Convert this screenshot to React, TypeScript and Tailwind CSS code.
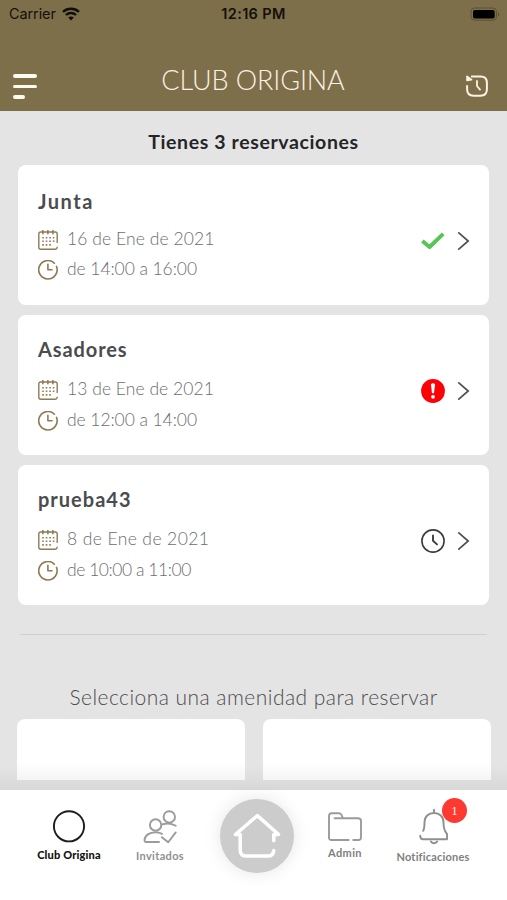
import React from 'react';
import clsx from 'clsx';

interface Reservation {
  id: number;
  name: string;
  date: string;
  time: string;
  status: 'approved' | 'rejected' | 'pending';
  nameClass: string;
  dateClass: string;
  timeClass: string;
  rowGap: string;
}

const reservations: Reservation[] = [
  {
    id: 1,
    name: 'Junta',
    date: '16 de Ene de 2021',
    time: 'de 14:00 a 16:00',
    status: 'approved',
    nameClass: 'mt-6 mb-[17px] tracking-[1.5px]',
    dateClass: 'tracking-[0.08px]',
    timeClass: 'tracking-[-0.07px]',
    rowGap: 'gap-[10px]',
  },
  {
    id: 2,
    name: 'Asadores',
    date: '13 de Ene de 2021',
    time: 'de 12:00 a 14:00',
    status: 'rejected',
    nameClass: 'mt-[22.5px] mb-[18.5px] tracking-[0.9px]',
    dateClass: 'tracking-[0.05px]',
    timeClass: 'tracking-[-0.07px]',
    rowGap: 'gap-[11px]',
  },
  {
    id: 3,
    name: 'prueba43',
    date: '8 de Ene de 2021',
    time: 'de 10:00 a 11:00',
    status: 'pending',
    nameClass: 'mt-[22.5px] mb-[18.5px] tracking-[1px]',
    dateClass: 'tracking-[0.4px]',
    timeClass: 'tracking-[-0.45px]',
    rowGap: 'gap-[11px]',
  },
];

function WifiIcon() {
  return (
    <svg width="18" height="14" viewBox="0 0 18 14" fill="none" stroke="#120e08">
      <path d="M1 4.9C5.4 0.7 12.6 0.7 17 4.9" strokeWidth="2.5" />
      <path d="M3.9 8C6.8 5.3 11.2 5.3 14.1 8" strokeWidth="2.3" />
      <path d="M9 13.4L6.2 10.5C7.8 9 10.2 9 11.8 10.5Z" fill="#120e08" stroke="none" />
    </svg>
  );
}

function BatteryIcon() {
  return (
    <svg width="32" height="15" viewBox="0 0 32 15" fill="none">
      <rect x="1" y="1" width="25.5" height="12.2" rx="3.5" stroke="#5d5032" strokeWidth="1" />
      <rect x="3" y="2.9" width="21.7" height="8.6" rx="1.8" fill="#000" />
      <path d="M28 5V9.4C29.8 8.6 29.8 5.8 28 5Z" fill="#5d5032" />
    </svg>
  );
}

function HistoryIcon() {
  return (
    <svg width="24" height="24" viewBox="0 0 24 24" fill="none" stroke="#fbf3e4" strokeWidth="2" strokeLinecap="round" strokeLinejoin="round">
      <path d="M6.8 2.6H15.5Q21.9 2.6 21.9 9V15.3Q21.9 21.7 15.5 21.7H8.5Q2.1 21.7 2.1 15.3V12" />
      <path d="M2 2.3V6.4L6.6 5.6Z" fill="#fbf3e4" strokeWidth="1.6" />
      <path d="M12 7V12L15 15.6" strokeWidth="1.8" />
    </svg>
  );
}

function CalendarIcon() {
  return (
    <svg width="20" height="20" viewBox="0 0 20 20" fill="none" stroke="#8d7b54" strokeWidth="1.4" strokeLinecap="round">
      <path d="M19.2 12.4V4Q19.2 2 17.2 2H2.8Q0.8 2 0.8 4V17.2Q0.8 19.2 2.8 19.2H17.2Q19 19.2 19.2 17.2" />
      <path d="M4.9 0.7V3.8M9.9 0.7V3.8M14.9 0.7V3.8" strokeWidth="1.6" />
      <path d="M4.2 7.8H16.4M4.2 11.3H16.4M4.2 14.9H13.4" strokeWidth="1.6" strokeLinecap="butt" strokeDasharray="1.6 1.93" />
    </svg>
  );
}

function ClockIcon() {
  return (
    <svg width="20" height="20" viewBox="0 0 20 20" fill="none" stroke="#8d7b54" strokeWidth="1.6" strokeLinecap="round">
      <path d="M16.4 3.2A9.2 9.2 0 1 0 18.5 6.4" />
      <path d="M9.9 4.2V9.8H14" strokeLinejoin="round" />
    </svg>
  );
}

function StatusIcon({ status }: { status: Reservation['status'] }) {
  if (status === 'approved') {
    return (
      <svg width="26" height="26" viewBox="0 0 26 26" fill="none" stroke="#56c551" strokeWidth="3.9">
        <path d="M2.4 13L9.6 19L23.2 5.8" strokeLinejoin="round" />
      </svg>
    );
  }
  if (status === 'rejected') {
    return (
      <svg width="26" height="26" viewBox="0 0 26 26">
        <circle cx="13" cy="13" r="11.9" fill="#fb0207" />
        <path d="M10.9 6.2Q13 4.4 15.1 6.2L14 15.2H12Z" fill="#fff" />
        <circle cx="13" cy="18.8" r="1.9" fill="#fff" />
      </svg>
    );
  }
  return (
    <svg width="26" height="26" viewBox="0 0 26 26" fill="none" stroke="#3d3d3d" strokeLinecap="round">
      <circle cx="13" cy="13" r="11.1" strokeWidth="1.6" />
      <path d="M13 7.4V12.8L17 16.4" strokeWidth="1.9" strokeLinejoin="round" />
    </svg>
  );
}

function ReservationCard({ reservation }: { reservation: Reservation }) {
  return (
    <div className="flex h-[140.5px] items-start justify-between rounded-lg bg-white pl-5 pr-[19px]">
      <div className="flex flex-col">
        <h3 className={clsx('h-6 whitespace-nowrap text-[20px] font-bold leading-6 text-[#4c4c4e]', reservation.nameClass)}>
          {reservation.name}
        </h3>
        <div className={clsx('flex flex-col text-[17.5px] font-light leading-5 text-[#6c6c70]', reservation.rowGap)}>
          <div className="flex h-5 items-center gap-[9px] whitespace-nowrap">
            <CalendarIcon />
            <span className={clsx('-mt-0.5', reservation.dateClass)}>{reservation.date}</span>
          </div>
          <div className="flex h-5 items-center gap-[9px] whitespace-nowrap">
            <ClockIcon />
            <span className={clsx('-mt-0.5', reservation.timeClass)}>{reservation.time}</span>
          </div>
        </div>
      </div>
      <div className="flex items-center gap-[11px] pt-[63px]">
        <StatusIcon status={reservation.status} />
        <svg width="13" height="20" viewBox="0 0 13 20" fill="none" stroke="#505050" strokeWidth="1.7">
          <path d="M1.8 1.8L11.2 10L1.8 18.2" strokeLinecap="round" />
        </svg>
      </div>
    </div>
  );
}

function TabBar() {
  return (
    <nav className="flex h-[110px] items-start bg-white text-[11px] font-bold leading-[14px]">
      <div className="ml-[29px] flex w-20 flex-col items-center pt-5">
        <svg width="34" height="34" viewBox="0 0 34 34" fill="none">
          <circle cx="17" cy="16.3" r="15.1" stroke="#1c1c1c" strokeWidth="1.9" />
        </svg>
        <span className="mt-1 whitespace-nowrap font-black tracking-[0.17px] text-[#111]">Club Origina</span>
      </div>
      <div className="ml-[11px] flex w-20 flex-col items-center pt-5">
        <svg width="34" height="34" viewBox="0 0 34 34" fill="none" stroke="#9b9b9b" strokeWidth="1.9" strokeLinecap="round" strokeLinejoin="round">
          <circle cx="12.6" cy="15" r="5.7" />
          <circle cx="26.3" cy="6.9" r="5.7" />
          <path d="M16 32H3Q1.5 32 1.5 29.8C2 25.3 6.5 22.4 12.4 22.4Q16 22.4 19 23.8" />
          <path d="M19.4 14.4Q26.5 11.9 32.7 15.8" />
          <path d="M18.9 27.2L25.2 32.3L32.7 22.4" />
        </svg>
        <span className="mt-[5px] whitespace-nowrap tracking-[0.33px] text-[#8f8f8f]">Invitados</span>
      </div>
      <div className="ml-[19.5px] mt-[9px] flex size-[74px] items-center justify-center rounded-full bg-[#cccccc] shadow-[0_0_18px_rgba(0,0,0,0.10)]">
        <svg width="50" height="48" viewBox="0 0 50 48" fill="none" stroke="#fff" strokeWidth="3.5" strokeLinecap="round" strokeLinejoin="round">
          <path d="M41.8 28.8V22.5H46.6L25.4 3.6L3.4 22.5H8.2V38Q8.2 44 14 44H35.8Q41.3 44 41.8 38.5" />
        </svg>
      </div>
      <div className="ml-[11.5px] flex w-20 flex-col items-center pt-5">
        <svg width="34" height="34" viewBox="0 0 34 34" fill="none" stroke="#9b9b9b" strokeWidth="1.9" strokeLinecap="round" strokeLinejoin="round">
          <path d="M20.7 30H3.4Q1 30 1 27.5V6Q1 3.2 3.6 3.2H11Q12.6 3.2 13.4 4.6L15 8.3H30Q33 8.3 33 11V27.5Q33 30 30.5 30H25.2M6.6 8.3H15" />
        </svg>
        <span className="mt-[2px] whitespace-nowrap tracking-[0.4px] text-[#808080]">Admin</span>
      </div>
      <div className="relative ml-1 flex w-[90px] flex-col items-center pt-[18px]">
        <svg width="32" height="38" viewBox="0 0 32 38" fill="none" stroke="#8f8f8f" strokeWidth="1.9" strokeLinecap="round" strokeLinejoin="round">
          <path d="M16 1.8V5" />
          <path d="M5.2 22.8Q6.5 20.5 6.5 14.5C6.5 8.5 10.5 5 16 5S25.5 8.5 25.5 14.5Q25.5 22 29 26V31.2H5Q2.5 31.2 2.2 27.8" />
          <path d="M12.8 33.4Q16 37.2 19.2 33.4" />
        </svg>
        <span className="mr-[2px] mt-[4px] whitespace-nowrap tracking-[0.2px] text-[#808080]">Notificaciones</span>
        <span className="absolute left-[53px] top-2 flex size-[25px] items-center justify-center rounded-full bg-[#fd3930] font-['Liberation_Serif'] text-xs font-normal text-white">
          1
        </span>
      </div>
    </nav>
  );
}

export default function App() {
  return (
    <div className="flex h-[900px] w-[507px] flex-col overflow-hidden bg-[#e4e4e4] font-['Lato',sans-serif]">
      <header className="h-[111px] bg-[#7e6f4b]">
        <div className="grid h-7 grid-cols-3 items-center font-['Inter',sans-serif] text-[14.5px] text-[#151009]">
          <div className="flex items-center gap-[6px] pl-[9px]">
            <span className="tracking-[-0.1px]">Carrier</span>
            <WifiIcon />
          </div>
          <span className="text-center font-semibold tracking-[0.35px]">12:16 PM</span>
          <div className="flex justify-end pr-[5px]">
            <BatteryIcon />
          </div>
        </div>
        <div className="flex h-[83px] items-start justify-between pl-[13px] pr-[18px]">
          <div className="flex w-[60px] flex-col gap-[7px] pt-[46px]">
            <span className="h-[3.5px] w-6 rounded-full bg-[#fffaf0]" />
            <span className="h-[3.5px] w-6 rounded-full bg-[#fffaf0]" />
            <span className="h-[3.5px] w-3 rounded-full bg-[#fffaf0]" />
          </div>
          <h1 className="whitespace-nowrap pl-1 pt-9 text-[27px] font-light leading-8 tracking-[-0.12px] text-[#fbf0e2]">CLUB ORIGINA</h1>
          <div className="flex w-[60px] justify-end pt-[46px]">
            <HistoryIcon />
          </div>
        </div>
      </header>

      <main className="flex h-[679px] flex-col overflow-hidden bg-[linear-gradient(to_bottom,#e4e4e4_655px,#d8d8d8_679px)]">
        <h2 className="mt-[19px] h-6 text-center text-[19.5px] font-bold leading-6 tracking-[0.62px] text-[#252527]">Tienes 3 reservaciones</h2>
        <div className="mx-[18px] mt-[10.5px] flex flex-col gap-[9.5px]">
          {reservations.map((r) => (
            <ReservationCard key={r.id} reservation={r} />
          ))}
        </div>
        <hr className="mx-5 mt-[29px] border-[#d0d0d0]" />
        <p className="mt-12 h-7 whitespace-nowrap text-center text-[21px] font-light leading-7 tracking-[0.46px] text-[#4c4c4e]">
          Selecciona una amenidad para reservar
        </p>
        <div className="mt-2 grid grid-cols-2 gap-[18px] pl-[17px] pr-4">
          <div className="h-[60.5px] rounded-t-lg bg-linear-to-b from-white from-70% to-[#f5f5f5]" />
          <div className="h-[60.5px] rounded-t-lg bg-linear-to-b from-white from-70% to-[#f5f5f5]" />
        </div>
      </main>

      <TabBar />
    </div>
  );
}
